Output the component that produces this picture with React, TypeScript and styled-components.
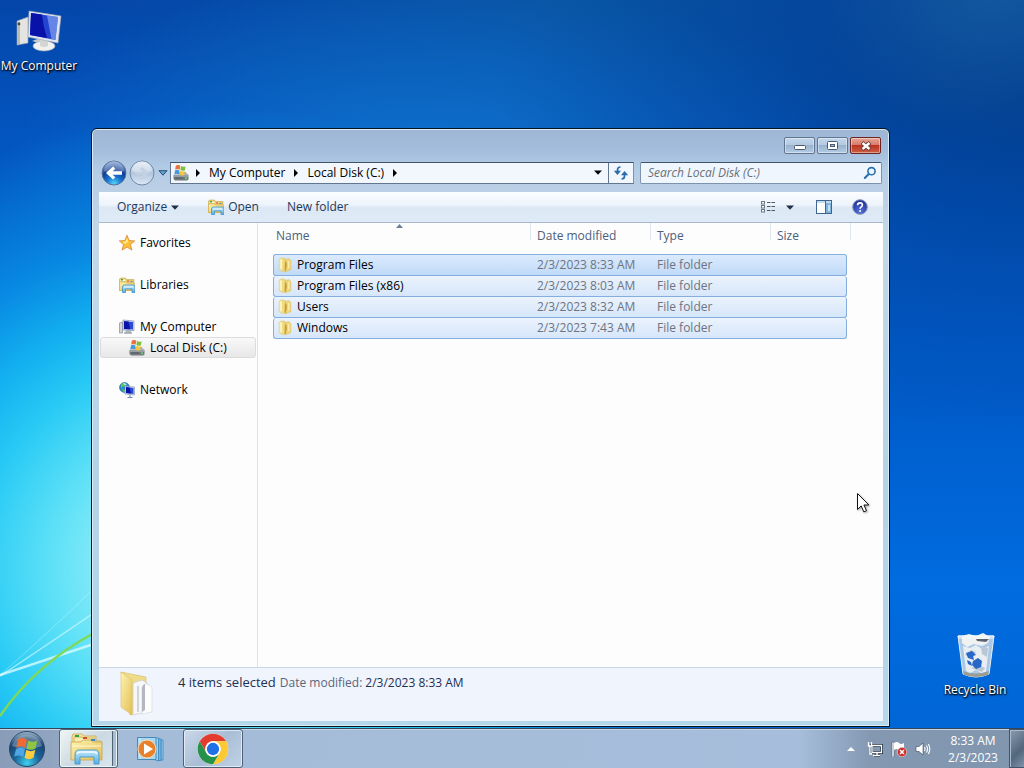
import React from 'react';
import styled, { createGlobalStyle, css } from 'styled-components';

const GlobalStyle = createGlobalStyle`
  *, *::before, *::after { box-sizing: border-box; }
  body { margin: 0; font-family: "Open Sans", "Noto Sans", sans-serif; font-size: 12px; line-height: 16px; color: #000; }
  button, input { font: inherit; color: inherit; margin: 0; }
  svg { display: block; flex: none; }
`;

/* ---------- shell ---------- */

const Shell = styled.div`
  min-height: 100vh;
  display: flex;
  flex-direction: column;
  cursor: default;
`;

const Desktop = styled.main`
  position: relative;
  flex: 1;
  overflow: hidden;
  background:
    radial-gradient(ellipse 180px 160px at 97% -2%, rgba(30, 105, 165, 0.6), rgba(30, 105, 165, 0) 100%),
    radial-gradient(ellipse 520px 460px at 22% 78%, #c6f6fb 0%, #94eef8 20%, #5ce0f7 34%, #28caf5 48%, #12aef0 60%, rgba(8, 140, 228, 0.9) 74%, rgba(4, 100, 205, 0) 100%),
    radial-gradient(ellipse 520px 330px at 100% 14%, rgba(0, 48, 115, 0.6) 0%, rgba(0, 56, 140, 0.35) 50%, rgba(0, 56, 140, 0) 100%),
    radial-gradient(ellipse 420px 190px at 42% 22%, rgba(18, 122, 212, 0.75) 0%, rgba(10, 95, 185, 0) 100%),
    radial-gradient(ellipse 520px 200px at 58% 0%, rgba(10, 90, 160, 0.7) 0%, rgba(10, 90, 160, 0) 100%),
    linear-gradient(180deg, #0446aa 0%, #0356c0 20%, #005cca 55%, #006ce0 80%, #0066d6 100%);
`;

const LightTrails = styled.svg`
  position: absolute;
  left: 0;
  bottom: 0;
`;

const Shortcut = styled.button<{ $corner: 'top' | 'bottom' }>`
  position: absolute;
  ${(p) => (p.$corner === 'top' ? css`top: 8px; left: 0;` : css`bottom: 30px; right: 10px;`)}
  width: 78px;
  padding: 0;
  border: 0;
  background: none;
  display: flex;
  flex-direction: column;
  align-items: center;
  gap: 2px;
  color: #fff;
  white-space: nowrap;
  text-shadow: 0 1px 2px #000, 1px 1px 2px #000;
`;

const Pointer = styled.svg`
  position: absolute;
  left: 856px;
  top: 492px;
  pointer-events: none;
  filter: drop-shadow(1px 1px 1px rgba(0, 0, 0, 0.35));
`;

/* ---------- window ---------- */

const Window = styled.section`
  position: absolute;
  top: 128px;
  right: 134px;
  bottom: 1px;
  left: 91px;
  display: flex;
  flex-direction: column;
  padding: 0 6px 5px 7px;
  border: 1px solid #08141f;
  border-radius: 6px 6px 0 0;
  box-shadow: inset 0 0 0 1px #d9ecf7;
  background: linear-gradient(180deg, #9db7d4 0, #a4bcdc 20px, #b2cce6 40px, #bdd0e5 64px, #c3d8e8 110px, #b5d3e6 60%, #b4d7ea 100%);
`;

const TitleBar = styled.header`
  display: flex;
  justify-content: flex-end;
  gap: 2px;
  height: 30px;
  padding: 8px 2px 4px;
`;

const CaptionButton = styled.button<{ $close?: boolean }>`
  display: grid;
  place-items: center;
  width: 31px;
  height: 17px;
  padding: 0;
  border: 1px solid ${(p) => (p.$close ? '#6b2420' : '#5f7590')};
  border-radius: 2px;
  box-shadow: inset 0 0 0 1px rgba(255, 255, 255, 0.4);
  background: ${(p) =>
    p.$close
      ? 'linear-gradient(180deg, #e6a697 0%, #d9796a 48%, #bb3422 50%, #cc6148 100%)'
      : 'linear-gradient(180deg, #c3d6eb 0%, #b3c9e1 48%, #99b3cf 50%, #b4cce4 100%)'};
`;

const NavRow = styled.div`
  display: flex;
  align-items: center;
  height: 33px;
  padding: 0 1px 6px 2px;
`;

const HistoryButtons = styled.div`
  display: flex;
  align-items: center;
  gap: 2px;
  width: 69px;
`;

const RoundButton = styled.button`
  width: 26px;
  height: 26px;
  padding: 0;
  border: 0;
  background: none;
`;

const PlainArrow = styled.button`
  display: grid;
  place-items: center;
  width: 12px;
  height: 20px;
  padding: 0;
  border: 0;
  background: none;
`;

const AddressBar = styled.div`
  flex: 1;
  display: flex;
  align-items: center;
  height: 22px;
  border: 1px solid #62768f;
  border-top-color: #3f536c;
  border-right-color: #7d93ad;
  background: #f1f7fd;
  padding-left: 2px;
`;

const CrumbArrow = styled(PlainArrow)`
  width: 18px;
`;

const Crumb = styled.button`
  height: 20px;
  padding: 0 2px;
  border: 0;
  background: none;
  white-space: nowrap;
`;

const AddressDrop = styled(PlainArrow)`
  width: 20px;
  margin-left: auto;
`;

const Refresh = styled(PlainArrow)`
  width: 25px;
  border-left: 1px solid #62768f;
`;

const SearchBox = styled.label`
  display: flex;
  align-items: center;
  flex: 0 1 242px;
  height: 22px;
  margin-left: 6px;
  padding: 0 4px 0 7px;
  border: 1px solid #7d93ad;
  border-top-color: #3f536c;
  border-radius: 2px;
  background: #eff6fd;
`;

const SearchInput = styled.input`
  flex: 1;
  min-width: 0;
  padding: 0;
  border: 0;
  outline: 0;
  background: none;
  &::placeholder { color: #6b7078; font-style: italic; opacity: 1; }
`;

const Client = styled.div`
  flex: 1;
  display: flex;
  flex-direction: column;
  min-height: 0;
`;

const Toolbar = styled.div`
  display: flex;
  align-items: center;
  height: 31px;
  padding: 0 15px 0 18px;
  color: #1e395b;
  border-bottom: 1px solid #a9b9cc;
  background: linear-gradient(180deg, #fcfdff 0%, #eef4fc 42%, #dde8f5 52%, #dfeaf7 100%);
`;

const ToolButton = styled.button<{ $gap?: number }>`
  display: flex;
  align-items: center;
  gap: 4px;
  height: 24px;
  padding: 0;
  margin-right: ${(p) => p.$gap ?? 0}px;
  border: 0;
  background: none;
  white-space: nowrap;
`;

const ToolRight = styled.div`
  display: flex;
  margin-left: auto;
`;

const Panes = styled.div`
  flex: 1;
  display: flex;
  min-height: 0;
  background: #fdfdfe;
`;

const NavPane = styled.nav`
  width: 159px;
  padding: 9px 1px 0;
  border-right: 1px solid #d6e5f5;
`;

const NavGroup = styled.ul`
  list-style: none;
  margin: 0 0 21px;
  padding: 0;
`;

const NavLink = styled.a<{ $child?: boolean }>`
  display: flex;
  align-items: center;
  gap: 5px;
  height: 21px;
  padding-left: ${(p) => (p.$child ? 28 : 18)}px;
  border: 1px solid transparent;
  border-radius: 3px;
  color: #000;
  text-decoration: none;
  ${(p) =>
    p.$child &&
    css`
      border-color: #dcdcdc;
      background: linear-gradient(180deg, #f9f9f9, #e7e7e7);
    `}
`;

const FilePane = styled.div`
  flex: 1;
  min-width: 0;
  padding-left: 15px;
  overflow: hidden;
`;

const FileTable = styled.table`
  width: 578px;
  table-layout: fixed;
  border-collapse: separate;
  border-spacing: 0;
  text-align: left;
`;

const Head = styled.th`
  position: relative;
  height: 31px;
  padding: 0 0 6px 6px;
  font-weight: normal;
  color: #4c607a;
  border-style: solid;
  border-width: 0 1px 0 0;
  border-image: linear-gradient(180deg, #dfe6ef 55%, transparent 56%) 1;
  &:first-child { padding-left: 3px; }
  &:nth-child(4) { border-image: none; border-color: transparent; }
  &:last-child { padding: 0; }
`;

const SortMark = styled.svg`
  position: absolute;
  top: 1px;
  left: 123px;
`;

const FileRow = styled.tr<{ $focused?: boolean }>`
  & > td {
    height: 21px;
    padding: 0 0 0 6px;
    color: #6d7480;
    white-space: nowrap;
    border: 0 solid #84aedd;
    border-bottom-width: 1px;
    background: ${(p) =>
      p.$focused ? 'linear-gradient(180deg, #dcebfd, #c0daf9)' : 'linear-gradient(180deg, #ebf3fd, #d6e6fa)'};
  }
  &:first-child > td { border-top-width: 1px; height: 22px; }
  & > td:first-child { padding-left: 4px; border-left-width: 1px; border-radius: 3px 0 0 3px; color: #000; }
  & > td:nth-child(4) { border-right-width: 1px; border-radius: 0 3px 3px 0; }
`;

const FileName = styled.span`
  display: flex;
  align-items: center;
  gap: 4px;
`;

const Details = styled.footer`
  display: flex;
  gap: 23px;
  height: 54px;
  padding: 1px 20px 0;
  border-top: 1px solid #cdd6e3;
  background: #f0f4fd;
  color: #1e2f52;
`;

const DetailsText = styled.p`
  display: flex;
  align-items: baseline;
  gap: 4px;
  margin: 0;
  padding-top: 5px;
`;

const Summary = styled.span`
  font-size: 13px;
`;

const Label = styled.span`
  margin-right: 3px;
  color: #5a6578;
`;

/* ---------- taskbar ---------- */

const Taskbar = styled.footer`
  display: flex;
  height: 40px;
  border-top: 1px solid #34475a;
  box-shadow: inset 0 1px 0 #c5d6e8;
  background: linear-gradient(90deg, #8a9db8 0, #90a4bf 50px, #a5bcd9 120px, #a6bedb 78%, #8498b2 85%, #8095ae 100%);
`;

const StartButton = styled.button`
  width: 54px;
  padding: 0 0 0 8px;
  border: 0;
  background: none;
`;

const TaskButton = styled.button<{ $state: 'active' | 'open' | 'pinned' }>`
  display: grid;
  place-items: center;
  width: 60px;
  margin-right: 3px;
  padding: 0;
  border: 1px solid transparent;
  border-radius: 3px;
  background: none;
  ${(p) =>
    p.$state === 'active' &&
    css`
      width: 59px;
      margin: 0 2px 0 5px;
      padding-right: 4px;
      border-color: #4d6277;
      box-shadow: inset 0 0 0 1px #eef6f4, inset -4px 0 0 #a8bdd2, inset -5px 0 0 #4d6277;
      background: linear-gradient(135deg, #f0f5f4 0%, #cbd9e2 50%, #dbe7ee 100%);
    `}
  ${(p) =>
    p.$state === 'open' &&
    css`
      border-color: #4d6277;
      box-shadow: inset 0 0 0 1px rgba(240, 247, 255, 0.7);
      background: linear-gradient(135deg, #cbd9e9 0%, #a9bdd5 50%, #c0d2e6 100%);
    `}
`;

const Tray = styled.div`
  display: flex;
  align-items: center;
  margin-left: auto;
  color: #fff;
`;

const TrayButton = styled.button`
  display: grid;
  place-items: center;
  width: 24px;
  height: 30px;
  padding: 0;
  border: 0;
  background: none;
`;

const Clock = styled.time`
  width: 74px;
  padding-left: 2px;
  text-align: center;
  line-height: 17px;
`;

const ShowDesktop = styled.button`
  align-self: stretch;
  width: 15px;
  padding: 0;
  border: 1px solid #41546a;
  border-right: 0;
  box-shadow: inset 1px 1px 0 #a9bace;
  background: linear-gradient(135deg, #8b9caf, #52667c 60%, #7e93aa);
`;

/* ---------- icons ---------- */

const PaintDefs = styled.svg`
  position: absolute;
`;

const Defs = () => (
  <PaintDefs width="0" height="0" aria-hidden="true">
    <defs>
      <linearGradient id="folder" x1="0" y1="0" x2="1" y2="1">
        <stop offset="0" stopColor="#fdf3b0" /><stop offset="1" stopColor="#e3bf55" />
      </linearGradient>
      <linearGradient id="folderPale" x1="0" y1="0" x2="1" y2="0">
        <stop offset="0" stopColor="#f7eda0" /><stop offset="1" stopColor="#e8cf70" />
      </linearGradient>
      <linearGradient id="blueStand" x1="0" y1="0" x2="0" y2="1">
        <stop offset="0" stopColor="#c5eafc" /><stop offset="1" stopColor="#55aee2" />
      </linearGradient>
      <radialGradient id="back" cx=".5" cy=".95" r=".9">
        <stop offset="0" stopColor="#55d8fb" /><stop offset=".35" stopColor="#1773cf" /><stop offset=".65" stopColor="#123d93" /><stop offset="1" stopColor="#7c9bd0" />
      </radialGradient>
      <linearGradient id="forward" x1="0" y1="0" x2="0" y2="1">
        <stop offset="0" stopColor="#dbe7f4" /><stop offset=".5" stopColor="#b3c6dd" /><stop offset="1" stopColor="#dce9f6" />
      </linearGradient>
      <radialGradient id="orb" cx=".5" cy=".9" r=".9">
        <stop offset="0" stopColor="#3fd0ee" /><stop offset=".4" stopColor="#19659c" /><stop offset=".75" stopColor="#1a4270" /><stop offset="1" stopColor="#a5bccf" />
      </radialGradient>
      <radialGradient id="help" cx=".5" cy=".8" r=".8">
        <stop offset="0" stopColor="#5472dc" /><stop offset="1" stopColor="#1a2e92" />
      </radialGradient>
    </defs>
  </PaintDefs>
);

const ComputerLarge = () => (
  <svg width="48" height="48" viewBox="0 0 48 48">
    <path d="M2 13l11-4v26L2 37z" fill="#e4e4e0" stroke="#9ca2ad" strokeWidth=".6" />
    <path d="M2 13l3 1v22l-3 1z" fill="#bbbcb8" /><circle cx="4" cy="16" r="1.4" fill="#4c4a30" />
    <path d="M17 33l8-3 5 4v4h-6v-3z" fill="#c8cccc" />
    <ellipse cx="29" cy="38" rx="11" ry="5" fill="#f1f2ef" stroke="#a8acb4" strokeWidth=".6" />
    <path d="M25 30l8 2v6q-4 2-8 0z" fill="#d3d6d5" />
    <path d="M14 3l32 5-3 27-30-6z" fill="#dfe5ee" stroke="#a2aabb" strokeWidth=".6" />
    <path d="M16 5l27 4-2.500 23L15 27z" fill="#2443cf" />
    <path d="M16 5l11 1.600q1 12 5 23.500L15 27z" fill="#0811a8" />
    <path d="M32 7.400l11 1.600-2.500 23-4-1z" fill="#8aaaf4" opacity=".65" />
  </svg>
);

const RecycleBin = () => (
  <svg width="48" height="48" viewBox="0 0 48 48">
    <path d="M7 4h36l-5 38q-13 6-26 0z" fill="#c7d8e8" fillOpacity=".85" stroke="#e8f1f8" />
    <path d="M11 4l7-2 7 2 7-3 7 4-2 6-6 3-8-2-7 3-5-4z" fill="#f0f2f2" />
    <path d="M12 14l7 2 6-3 6 4 7-3-3 26-5 1-5-3-6 3-4-2z" fill="#e8edf2" />
    <path d="M25 7h13l-3 3-9-1z" fill="#5b6470" /><path d="M14 23l6-5 5 2-3 6zM30 14l7 2-1 9-5-3zM20 36l8-3 6 3-3 4z" fill="#b9c6d3" />
    <path d="M15 21l6-2 4 4-3 1 1 4-6-2zM22 29l5-3 4 3-1 6-5 2-4-4zM16 28l4 2 1 4-4-2z" fill="#2867c6" />
    <path d="M12 39q12 5 26 0l-1 4q-12 4-24 0z" fill="#9b9d95" />
    <path d="M7 4h36l-1 2H8z" fill="none" stroke="#f4f9fc" />
  </svg>
);

const MonitorSmall = () => (
  <svg width="16" height="16" viewBox="0 0 16 16">
    <path d="M.5 4l3-1v11h-3z" fill="#d3d5d6" stroke="#878c96" strokeWidth=".7" />
    <path d="M7 11h5v3H6z" fill="#b6bdc6" /><path d="M4 1l11 1v9.500L4 11z" fill="#dce3ee" stroke="#8290ad" strokeWidth=".7" />
    <path d="M5 2.200l9 .8v7.500l-9-.6z" fill="#2a49d4" /><path d="M5 2.200l4.500.4 1.500 7.700-6-.4z" fill="#0811a8" /><path d="M5 14h8" stroke="#9ba4b2" strokeWidth="1.500" />
  </svg>
);

const Disk = () => (
  <svg width="16" height="16" viewBox="0 0 16 16">
    <path d="M1 9.500L3.500 7h9L15.500 10z" fill="#a9adaf" /><path d="M.5 10h15v4.500L14 15.500H2L.5 14z" fill="#727a7f" />
    <path d="M1 10.500h14v1H1z" fill="#bdc3c6" /><path d="M2 13h8" stroke="#515a60" /><circle cx="13" cy="13.200" r="1" fill="#6fdc66" />
    <path d="M2.800.8Q5-.8 7.300.7L6.600 4.800Q4.400 3.400 2.200 4.800z" fill="#ef7038" /><path d="M8 .9q2.200 1.500 4.600.3L11.900 5.200q-2.400 1.200-4.500-.2z" fill="#7cc03d" />
    <path d="M2 5.400q2.300-1.400 4.500 0L5.800 9.500q-2.200-1.400-4.500 0z" fill="#4499e0" /><path d="M7.200 5.700q2.200 1.500 4.600.3L11.100 10q-2.400 1.200-4.500-.2z" fill="#f7c63a" />
  </svg>
);

const LibraryIcon = () => (
  <svg width="16" height="16" viewBox="0 0 32 32">
    <path d="M1 4l2-2h10l2 3h15v22H1z" fill="#eacb6a" stroke="#c19b3d" /><path d="M3 5h10v3H3z" fill="#fdfbe8" />
    <path d="M4 4h4v3H4z" fill="#3faa52" /><path d="M16 7h4v2h-4z" fill="#d8543a" /><path d="M23 8h4v2h-4z" fill="#4b8fd6" />
    <path d="M1 10h12l3 2h15v15H1z" fill="url(#folder)" stroke="#caa54a" />
    <path d="M7 31V20q0-4 4-4h17q4 0 4 4v11h-6v-7H13v7z" fill="url(#blueStand)" stroke="#3d8fc4" strokeWidth="1.500" />
    <path d="M10 20h18" stroke="#effaff" strokeWidth="2" />
  </svg>
);

/* Explorer's taskbar mark: three tabbed folders held in a blue rack. */
const ExplorerIcon = () => (
  <svg width="34" height="32" viewBox="0 0 34 32">
    <path d="M2 4l1-3h9l2 2h12v20H2z" fill="#f4e4a0" stroke="#c9a850" strokeWidth=".8" />
    <path d="M4 7V4h8l1 1h12v3h6v18H4z" fill="#f8ecae" stroke="#c9a850" strokeWidth=".8" />
    <path d="M1 9h10l2-2h9l1 2h9v18H1z" fill="url(#folder)" stroke="#c9a24a" strokeWidth=".8" />
    <path d="M5 2h4v2H5z" fill="#2fa34c" /><path d="M13 4h4v2h-4z" fill="#cf4f38" /><path d="M21 6h4v2h-4z" fill="#3a86cf" />
    <path d="M2 13h29" stroke="#fff8d4" />
    <path d="M5 31v-9q0-5 4-5h16q4 0 4 5v9h-5v-7H10v7z" fill="url(#blueStand)" stroke="#4596c8" strokeWidth=".9" />
    <path d="M7 21q1-2 3-2h14q2 0 3 2" fill="none" stroke="#f4fcff" strokeWidth="1.300" />
  </svg>
);

const Star = () => (
  <svg width="16" height="16" viewBox="0 0 16 16">
    <path d="M8 .3l2.200 5.200 5.500.4-4.200 3.600 1.400 5.600L8 12.100l-4.900 3 1.400-5.600L.3 5.900l5.500-.4z" fill="#fbc036" stroke="#d8792a" strokeWidth=".7" />
    <path d="M8 3l1.300 3.500L6 9 3.500 7l3-.5z" fill="#ffe991" />
  </svg>
);

const NetworkIcon = () => (
  <svg width="16" height="16" viewBox="0 0 16 16">
    <circle cx="5.500" cy="5.500" r="5" fill="#2b86cf" stroke="#1c5b92" strokeWidth=".5" />
    <path d="M2 2q3-2 5 0l-1 2-3 1-1 2zM3 7l3 1v2L4 9.500z" fill="#5cc852" /><path d="M4 1l4 1-2 1.500z" fill="#c5f0fb" />
    <path d="M6 4l9.500 1v8L6 12z" fill="#d6dfee" stroke="#7e8db1" strokeWidth=".6" /><path d="M7 5l7.500 1v6L7 11z" fill="#2a49d4" /><path d="M7 5l3.500.5 1.500 6L7 11z" fill="#0811a8" />
    <path d="M11 13v2M8.500 15.500h5" stroke="#7185a8" />
  </svg>
);

const FolderSmall = () => (
  <svg width="15" height="16" viewBox="0 0 15 16">
    <path d="M6 2.500l5-.8 1.800 1.600v9.500L8 14.500z" fill="#f0d878" stroke="#d9b95a" strokeWidth=".5" />
    <path d="M1.200 2Q4 .2 6.600 1.200L8 3.500 7.500 14.800Q4 14.600 1.200 12.800z" fill="url(#folderPale)" stroke="#dcc062" strokeWidth=".5" />
    <path d="M7 3.500Q9 5 8.800 9L7.600 14.500 6.600 13z" fill="#c79d37" /><path d="M3 2.600v9.400" stroke="#fffbd8" strokeWidth="1.200" />
    <path d="M10.800 4v7" stroke="#fff4ba" />
  </svg>
);

const FolderLarge = () => (
  <svg width="36" height="48" viewBox="0 0 36 48">
    <path d="M2 3l25 5v34l-16 4z" fill="#efdc8a" stroke="#d5bb5e" strokeWidth=".6" />
    <path d="M14 14l9-3 5 3v29l-14 3z" fill="#f6f7f8" stroke="#c2c5ca" strokeWidth=".6" />
    <path d="M23 18q3-5 7-2l3 2v25l-10 2z" fill="#fdfdfd" stroke="#d1d4d9" strokeWidth=".6" />
    <path d="M19 17v26" stroke="#c3c7cd" strokeWidth="1.500" /><path d="M23 43V20q0-4 3-5v26z" fill="#b3b8c0" />
    <path d="M2 3l11 8v35L2 38z" fill="url(#folder)" stroke="#d9bf62" strokeWidth=".6" />
  </svg>
);

const Down = ({ color = '#1e2f4a' }: { color?: string }) => (
  <svg width="8" height="5" viewBox="0 0 8 5"><path d="M0 .5h8L4 4.800z" fill={color} /></svg>
);

const Right = () => (
  <svg width="4" height="8" viewBox="0 0 4 8"><path d="M0 0l4 4-4 4z" fill="#000" /></svg>
);

const BackIcon = () => (
  <svg width="26" height="26" viewBox="0 0 26 26">
    <circle cx="13" cy="13" r="12" fill="url(#back)" stroke="#5a7398" />
    <path d="M3 11A10 10 0 0 1 23 11Q13 15 3 11z" fill="#fff" opacity=".25" />
    <path d="M5 13l7-6.500 2.300 2.300-2.600 2.500H21v3.500h-9.300l2.600 2.500L12 19.600z" fill="#fff" />
  </svg>
);

const ForwardIcon = () => (
  <svg width="26" height="26" viewBox="0 0 26 26">
    <circle cx="13" cy="13" r="12" fill="url(#forward)" stroke="#7188a3" />
    <path d="M3 11A10 10 0 0 1 23 11Q13 15 3 11z" fill="#fff" opacity=".35" />
    <path d="M20 13l-7-6-2 2 3 3H6v2.500h8l-3 3 2 2z" fill="#c3d1e3" />
  </svg>
);

const StartOrb = () => (
  <svg width="38" height="38" viewBox="0 0 38 38">
    <circle cx="19" cy="19" r="17.500" fill="url(#orb)" stroke="#26496a" />
    <path d="M4 16A15.500 15.500 0 0 1 34 16Q19 22 4 16z" fill="#d5e6ef" opacity=".33" />
    <path d="M10 9.500q4.500-3 9 .2l-1.800 8q-4.500-2.800-9 0z" fill="#f06a32" />
    <path d="M20.300 10.500q4.500 2.700 9 0l-1.800 8q-4.500 2.700-9 0z" fill="#8ec642" />
    <path d="M8 19q4.500-2.700 9 0l-1.800 8q-4.500-2.700-9-.2z" fill="#4fa6e2" />
    <path d="M18.300 19.800q4.500 2.700 9 0l-1.800 8q-4.500 2.700-9 0z" fill="#fbcc3e" />
  </svg>
);

const PlayerIcon = () => (
  <svg width="28" height="28" viewBox="0 0 28 28">
    <path d="M19 3h4v23l-4-1zM22.500 4h2.500v21.500h-2.500zM25 5h2v20h-2z" fill="#9fd2f2" stroke="#3a86be" strokeWidth=".8" />
    <path d="M1.500 2.500h18.500v22h-18.500z" fill="#a9d8f3" stroke="#4789b5" /><path d="M4 3v21" stroke="#d8f0fb" />
    <circle cx="11" cy="14" r="9" fill="#e8812b" stroke="#f8dbb5" /><path d="M8 8.500l9 5.500-9 5.500z" fill="#fff" />
  </svg>
);

const ChromeIcon = () => (
  <svg width="32" height="32" viewBox="0 0 48 48">
    <circle cx="24" cy="24" r="23" fill="#fff" />
    <path d="M4.100 12.500A23 23 0 0 1 43.900 12.500H24A11.500 11.500 0 0 0 14 29.700z" fill="#e33b2e" />
    <path d="M43.900 12.500A23 23 0 0 1 24 47l10-17.300A11.500 11.500 0 0 0 24 12.500z" fill="#fcc934" />
    <path d="M4.100 12.500A23 23 0 0 0 24 47l10-17.300a11.500 11.500 0 0 1-20 0z" fill="#269149" />
    <circle cx="24" cy="24" r="11.500" fill="#fff" /><circle cx="24" cy="24" r="9.200" fill="#2270e8" />
  </svg>
);

const RefreshIcon = () => (
  <svg width="16" height="16" viewBox="0 0 16 16">
    <path d="M7.500 2Q4.500 2 4.500 5v2" fill="none" stroke="#2c6cab" strokeWidth="1.700" /><path d="M.8 5.800h7.200L4.500 10z" fill="#2c6cab" />
    <path d="M8.500 14q3 0 3-3V9" fill="none" stroke="#2c6cab" strokeWidth="1.700" /><path d="M8 10.200h7.200L11.500 6z" fill="#2c6cab" />
  </svg>
);

const SearchIcon = () => (
  <svg width="14" height="14" viewBox="0 0 14 14">
    <circle cx="8.500" cy="5.200" r="3.600" fill="#e9f5ff" stroke="#2870ae" strokeWidth="1.600" /><path d="M5.800 8L1.800 12" stroke="#2870ae" strokeWidth="2" strokeLinecap="round" />
  </svg>
);

const ViewIcon = () => (
  <svg width="16" height="14" viewBox="0 0 16 14">
    {[1, 5, 9].map((y) => (
      <g key={y}>
        <rect x="1.500" y={y + 0.5} width="3" height="2.500" fill="#fff" stroke="#6e7784" />
        <path d={`M7 ${y + 1.5}h3.500m1 0h3.500`} stroke="#4e5968" />
      </g>
    ))}
  </svg>
);

const PaneIcon = () => (
  <svg width="16" height="14" viewBox="0 0 16 14">
    <rect x=".5" y=".5" width="15" height="13" fill="#fff" stroke="#3e668e" /><path d="M1 1h14v2H1z" fill="#c2dcf0" />
    <path d="M10 3h5v10h-5z" fill="#7fb4dc" /><path d="M9.500 1v12" stroke="#3e668e" /><path d="M12 5h2v6h-2z" fill="#c5e1f5" />
  </svg>
);

const HelpIcon = () => (
  <svg width="16" height="16" viewBox="0 0 16 16">
    <circle cx="8" cy="8" r="7.300" fill="url(#help)" stroke="#8490b4" />
    <path d="M5.600 6.300Q5.600 3.900 8 3.900t2.400 2.200Q10.400 7.300 9 8.100 8.100 8.700 8.100 9.800" fill="none" stroke="#fff" strokeWidth="1.600" /><circle cx="8.100" cy="12" r="1" fill="#fff" />
  </svg>
);

/* ---------- page ---------- */

const files = [
  { name: 'Program Files', date: '2/3/2023 8:33 AM' },
  { name: 'Program Files (x86)', date: '2/3/2023 8:03 AM' },
  { name: 'Users', date: '2/3/2023 8:32 AM' },
  { name: 'Windows', date: '2/3/2023 7:43 AM' },
];

function ExplorerWindow() {
  return (
    <Window aria-label="Local Disk (C:)">
      <TitleBar>
        <CaptionButton aria-label="Minimize">
          <svg width="12" height="9" viewBox="0 0 12 9"><rect x=".5" y="4.500" width="11" height="4" rx="1" fill="#fff" stroke="#4a5a70" /></svg>
        </CaptionButton>
        <CaptionButton aria-label="Maximize">
          <svg width="11" height="9" viewBox="0 0 11 9"><rect x=".5" y=".5" width="10" height="8" rx="1" fill="#fff" stroke="#4a5a70" /><rect x="3.500" y="3.500" width="4" height="2" fill="#a4bbd4" stroke="#4a5a70" /></svg>
        </CaptionButton>
        <CaptionButton aria-label="Close" $close>
          <svg width="12" height="10" viewBox="0 0 12 10"><path d="M2 1.500l8 7M10 1.500l-8 7" stroke="#653833" strokeWidth="4" /><path d="M2.500 2l7 6M9.500 2l-7 6" stroke="#fff" strokeWidth="2.400" /></svg>
        </CaptionButton>
      </TitleBar>
      <NavRow>
        <HistoryButtons>
          <RoundButton aria-label="Back"><BackIcon /></RoundButton>
          <RoundButton aria-label="Forward"><ForwardIcon /></RoundButton>
          <PlainArrow aria-label="Recent locations">
            <svg width="10" height="6" viewBox="0 0 10 6"><path d="M1 .7h8L5 5.200z" fill="#5fa3cf" stroke="#2a4d78" /></svg>
          </PlainArrow>
        </HistoryButtons>
        <AddressBar>
          <Disk />
          <CrumbArrow aria-label="Show root"><Right /></CrumbArrow>
          <Crumb>My Computer</Crumb>
          <CrumbArrow aria-label="Show drives"><Right /></CrumbArrow>
          <Crumb>Local Disk (C:)</Crumb>
          <CrumbArrow aria-label="Show folders"><Right /></CrumbArrow>
          <AddressDrop aria-label="Previous locations"><Down color="#000" /></AddressDrop>
          <Refresh aria-label="Refresh"><RefreshIcon /></Refresh>
        </AddressBar>
        <SearchBox>
          <SearchInput aria-label="Search" placeholder="Search Local Disk (C:)" />
          <SearchIcon />
        </SearchBox>
      </NavRow>
      <Client>
        <Toolbar>
          <ToolButton $gap={29}>Organize <Down /></ToolButton>
          <ToolButton $gap={28}><LibraryIcon /> Open</ToolButton>
          <ToolButton>New folder</ToolButton>
          <ToolRight>
            <ToolButton $gap={10} aria-label="Change view"><ViewIcon /></ToolButton>
            <ToolButton $gap={22} aria-label="More views"><Down /></ToolButton>
            <ToolButton $gap={20} aria-label="Preview pane"><PaneIcon /></ToolButton>
            <ToolButton aria-label="Help"><HelpIcon /></ToolButton>
          </ToolRight>
        </Toolbar>
        <Panes>
          <NavPane aria-label="Folders">
            <NavGroup><li><NavLink href="#favorites"><Star />Favorites</NavLink></li></NavGroup>
            <NavGroup><li><NavLink href="#libraries"><LibraryIcon />Libraries</NavLink></li></NavGroup>
            <NavGroup>
              <li><NavLink href="#computer"><MonitorSmall />My Computer</NavLink></li>
              <li><NavLink href="#disk-c" $child aria-current="page"><Disk />Local Disk (C:)</NavLink></li>
            </NavGroup>
            <NavGroup><li><NavLink href="#network"><NetworkIcon />Network</NavLink></li></NavGroup>
          </NavPane>
          <FilePane>
            <FileTable>
              <colgroup>
                <col /><col width="120" /><col width="120" /><col width="76" /><col width="4" />
              </colgroup>
              <thead>
                <tr>
                  <Head>
                    Name
                    <SortMark width="7" height="4" viewBox="0 0 7 4"><path d="M0 4l3.500-4L7 4z" fill="#6a8096" /></SortMark>
                  </Head>
                  <Head>Date modified</Head>
                  <Head>Type</Head>
                  <Head>Size</Head>
                  <Head aria-hidden="true" />
                </tr>
              </thead>
              <tbody>
                {files.map((f, i) => (
                  <FileRow key={f.name} $focused={i === 0}>
                    <td><FileName><FolderSmall />{f.name}</FileName></td>
                    <td>{f.date}</td>
                    <td>File folder</td>
                    <td />
                  </FileRow>
                ))}
              </tbody>
            </FileTable>
          </FilePane>
        </Panes>
        <Details>
          <FolderLarge />
          <DetailsText>
            <Summary>4 items selected</Summary>
            <span><Label>Date modified:</Label>2/3/2023 8:33 AM</span>
          </DetailsText>
        </Details>
      </Client>
    </Window>
  );
}

export default function App() {
  return (
    <Shell>
      <GlobalStyle />
      <Defs />
      <Desktop>
        <LightTrails width="130" height="180" viewBox="0 0 130 180" fill="none">
          <path d="M0 128Q50 95 130 40" stroke="#d5fbff" strokeWidth="1.500" opacity=".6" />
          <path d="M0 127Q60 75 130 5" stroke="#d5fbff" strokeWidth="1" opacity=".35" />
          <path d="M0 127Q45 112 130 84" stroke="#e2fdff" strokeWidth="2.500" opacity=".75" />
          <path d="M0 168Q36 116 94 85" stroke="#7fd957" strokeWidth="2.500" />
        </LightTrails>
        <Shortcut $corner="top"><ComputerLarge />My Computer</Shortcut>
        <ExplorerWindow />
        <Shortcut $corner="bottom"><RecycleBin />Recycle Bin</Shortcut>
        <Pointer width="14" height="22" viewBox="0 0 14 22">
          <path d="M1.500 1.500v16l3.700-3.600 2.600 6 2.700-1.200-2.600-5.700h5z" fill="#fff" stroke="#111" />
        </Pointer>
      </Desktop>
      <Taskbar>
        <StartButton aria-label="Start"><StartOrb /></StartButton>
        <TaskButton $state="active" aria-label="Windows Explorer"><ExplorerIcon /></TaskButton>
        <TaskButton $state="pinned" aria-label="Media Player"><PlayerIcon /></TaskButton>
        <TaskButton $state="open" aria-label="Chrome"><ChromeIcon /></TaskButton>
        <Tray>
          <TrayButton aria-label="Show hidden icons"><svg width="8" height="4" viewBox="0 0 8 4"><path d="M0 4l4-4 4 4z" fill="#fff" /></svg></TrayButton>
          <TrayButton aria-label="Network">
            <svg width="16" height="16" viewBox="0 0 16 16" fill="none">
              <path d="M4.500 4.500h10v7h-10zM7 14.500h6M10 12v2" stroke="#253445" strokeWidth="3" /><path d="M5 4.500h9.500v7H5zM6 14.500h7M10 12v2M1.500 1v4h3V1M3 5v8h2" stroke="#fff" strokeWidth="1.300" />
            </svg>
          </TrayButton>
          <TrayButton aria-label="Action Center">
            <svg width="16" height="16" viewBox="0 0 16 16">
              <path d="M1 1h2v15H1z" fill="#fff" stroke="#34465a" strokeWidth=".5" /><path d="M3 2q3-2 5 0t5 0v7q-3 2-5 0T3 9z" fill="#fff" />
              <circle cx="11" cy="11" r="4.700" fill="#d02b2b" stroke="#fff" strokeWidth=".5" /><path d="M9 9l4 4M13 9l-4 4" stroke="#fff" strokeWidth="1.500" />
            </svg>
          </TrayButton>
          <TrayButton aria-label="Volume">
            <svg width="16" height="16" viewBox="0 0 16 16" fill="none">
              <path d="M1 5.500h3L8 2v12l-4-3.500H1z" fill="#fff" stroke="#34465a" strokeWidth=".6" />
              <path d="M9.500 6q1 2 0 4M11.500 4.500q2 3.500 0 7M13.300 3q3 5 0 10" stroke="#fff" strokeWidth="1.100" />
            </svg>
          </TrayButton>
          <Clock>8:33 AM<br />2/3/2023</Clock>
          <ShowDesktop aria-label="Show desktop" />
        </Tray>
      </Taskbar>
    </Shell>
  );
}
